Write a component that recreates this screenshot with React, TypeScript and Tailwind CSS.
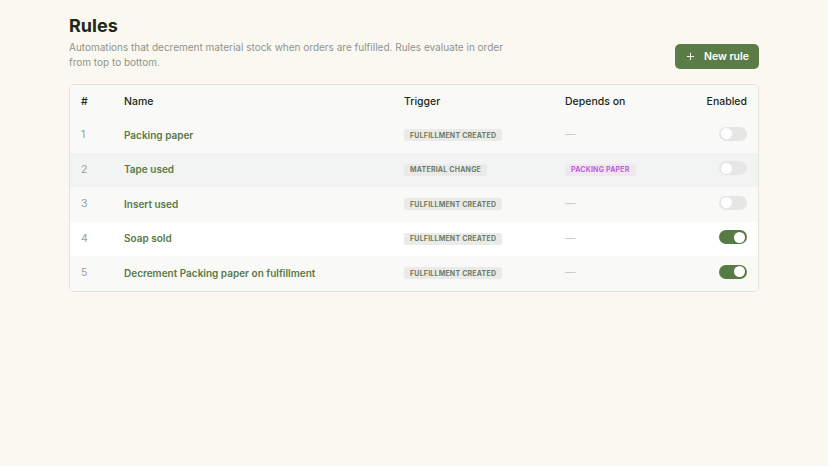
import { Plus } from "lucide-react";

type Rule = {
  id: number;
  name: string;
  trigger: string;
  dependsOn?: string;
  enabled: boolean;
};

const rules: Rule[] = [
  { id: 1, name: "Packing paper", trigger: "Fulfillment created", enabled: false },
  { id: 2, name: "Tape used", trigger: "Material change", dependsOn: "Packing paper", enabled: false },
  { id: 3, name: "Insert used", trigger: "Fulfillment created", enabled: false },
  { id: 4, name: "Soap sold", trigger: "Fulfillment created", enabled: true },
  { id: 5, name: "Decrement Packing paper on fulfillment", trigger: "Fulfillment created", enabled: true },
];

// row tints as they appear in the list (2 is hovered, 4 is plain white)
const rowBg = ["bg-[#f9f9f7]", "bg-[#f2f3f3]", "bg-[#f9f9f7]", "bg-white", "bg-[#f9f9f7]"];

function Toggle({ on }: { on: boolean }) {
  return (
    <div
      className={`w-[28px] h-[14px] rounded-full flex items-center px-[2px] ${
        on ? "bg-[#587a45] justify-end" : "bg-[#e6e6e4] justify-start"
      }`}
    >
      <div className="w-[11px] h-[11px] rounded-full bg-white" />
    </div>
  );
}

function Badge({ children, tone = "gray" }: { children: string; tone?: "gray" | "purple" }) {
  return (
    <span
      className={`flex items-center h-[12px] px-[6px] rounded-[2px] text-[7px] leading-none font-bold uppercase tracking-[0.03em] ${
        tone === "purple" ? "bg-[#efe9ef] text-[#c25ade]" : "bg-[#eaeae8] text-[#6f7c66]"
      }`}
    >
      {children}
    </span>
  );
}

export default function App() {
  return (
    <div
      className="min-h-[466px] w-full bg-[#fbf8f1] px-[69px] pt-[14px]"
      style={{ fontFamily: "Inter, 'Liberation Sans', sans-serif" }}
    >
      <div className="flex items-start justify-between">
        <div>
          <h1 className="text-[18px] leading-[24px] font-bold text-[#1d2918]">Rules</h1>
          <p className="mt-[2px] w-[450px] text-[10px] leading-[15px] text-[#8d958c]">
            Automations that decrement material stock when orders are fulfilled. Rules evaluate in order
            from top to bottom.
          </p>
        </div>
        <button className="mt-[30px] h-[25px] px-[10px] rounded-[5px] bg-[#5b7c46] text-white text-[10.5px] font-semibold flex items-center gap-[8px]">
          <Plus size={11} strokeWidth={2} />
          New rule
        </button>
      </div>

      <div className="mt-[14px] rounded-[5px] border border-[#e2e2de] overflow-hidden">
        <div className="grid grid-cols-[43px_280px_161px_1fr_auto] items-center h-[33px] px-[11px] bg-[#f9f9f7] text-[10.5px] font-medium text-[#1d2918]">
          <div>#</div>
          <div>Name</div>
          <div>Trigger</div>
          <div>Depends on</div>
          <div className="text-right">Enabled</div>
        </div>
        {rules.map((r, i) => (
          <div
            key={r.id}
            className={`grid grid-cols-[43px_280px_161px_1fr_auto] items-center h-[34.5px] px-[11px] ${rowBg[i]}`}
          >
            <div className="text-[10.5px] text-[#9b9d98]">{r.id}</div>
            <div className="text-[10px] font-semibold text-[#587a46]">{r.name}</div>
            <div className="flex">
              <Badge>{r.trigger}</Badge>
            </div>
            <div className="flex">
              {r.dependsOn ? (
                <Badge tone="purple">{r.dependsOn}</Badge>
              ) : (
                <span className="text-[10.5px] text-[#c4c6c0]">—</span>
              )}
            </div>
            <div className="flex justify-end pb-[3px]">
              <Toggle on={r.enabled} />
            </div>
          </div>
        ))}
      </div>
    </div>
  );
}
